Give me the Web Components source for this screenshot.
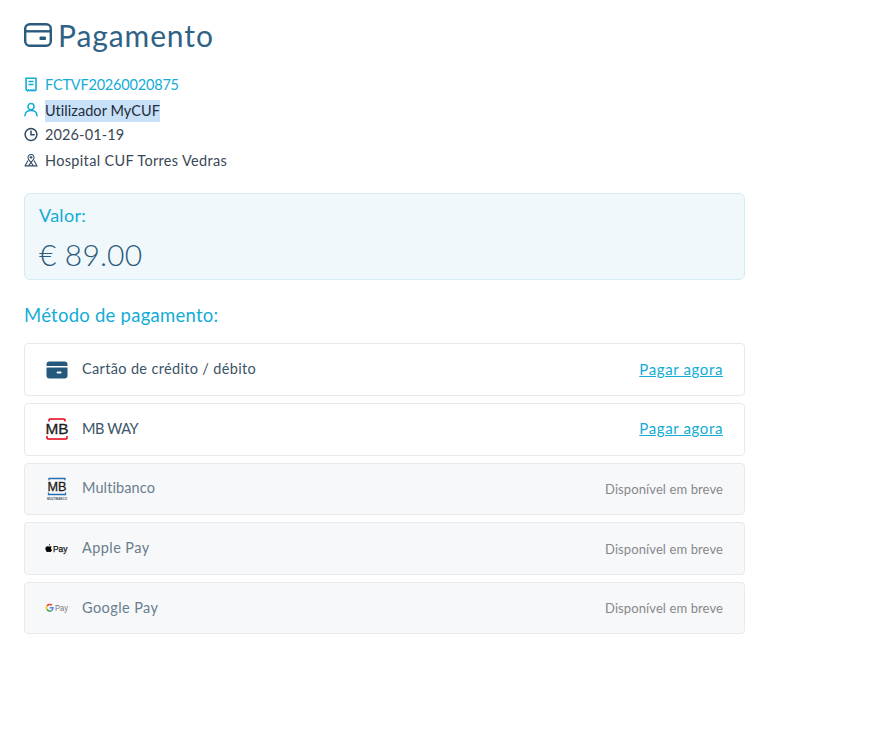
<!DOCTYPE html>
<html lang="pt"><head><meta charset="utf-8"><title>Pagamento</title>
<style>
html,body{margin:0;padding:0;background:#fff}
body{font-family:Lato,"Open Sans",sans-serif;color:#2c4a63}
</style></head><body>
<pay-page>
  <pay-title slot="title">Pagamento</pay-title>
  <info-row slot="info" icon="receipt" tone="link" style="--ls:-.19px">FCTVF20260020875</info-row>
  <info-row slot="info" icon="user" tone="selected" style="--ls:.05px">Utilizador MyCUF</info-row>
  <info-row slot="info" icon="clock" style="--ls:.12px">2026-01-19</info-row>
  <info-row slot="info" icon="hospital" style="--ls:.33px">Hospital CUF Torres Vedras</info-row>
  <value-box slot="value" label="Valor:" amount="€ 89.00"></value-box>
  <method-list slot="methods" heading="Método de pagamento:">
    <method-row icon="card" action="Pagar agora" style="--ls:.34px">Cartão de crédito / débito</method-row>
    <method-row icon="mbway" action="Pagar agora" style="--ls:-.4px">MB WAY</method-row>
    <method-row icon="multibanco" soon style="--ls:.1px">Multibanco</method-row>
    <method-row icon="apple" soon style="--ls:.42px">Apple Pay</method-row>
    <method-row icon="google" soon style="--ls:.42px">Google Pay</method-row>
  </method-list>
</pay-page>
<script>
const ICONS={
receipt:`<svg width="14" height="15" viewBox="0 0 14 15" fill="none" stroke="#12acd6" stroke-width="1.600"><path d="M2 1.200h10v11.600l-1.200 1-1.300-1-1.200 1-1.300-1-1.300 1-1.200-1-1.300 1-1-1z" stroke-linejoin="round"/><path d="M4.500 4.500h5M4.500 7.500h5" /></svg>`,
user:`<svg width="15" height="15" viewBox="0 0 15 15" fill="none" stroke="#12acd6" stroke-width="1.600" stroke-linecap="round"><circle cx="7.500" cy="4.400" r="3.300"/><path d="M1 14.200c.3-3.500 3-5.500 6.500-5.500s6.200 2 6.500 5.500"/></svg>`,
clock:`<svg width="15" height="15" viewBox="0 0 15 15" fill="none" stroke="#2c4a63" stroke-width="1.600" stroke-linecap="round"><circle cx="7.500" cy="7.500" r="6.300"/><path d="M7.500 3.800v4h3.400"/></svg>`,
hospital:`<svg width="15" height="14" viewBox="0 0 15 14" fill="none" stroke="#2c4a63" stroke-width="1.100"><path d="M4.300 7.500 1 13.300h13l-3.300-5.800" stroke-linejoin="round"/><path d="M7.500 1a3.300 3.300 0 0 1 3.300 3.300c0 2-1.900 3.700-3.300 5.200-1.400-1.500-3.300-3.200-3.300-5.200A3.300 3.300 0 0 1 7.500 1z"/><path d="M7.500 2.700v3M6 4.200h3M5 13l2.500-3.400L10 13" /></svg>`,
card:`<svg width="22" height="18" viewBox="0 0 22 18"><path fill="#24587c" fill-rule="evenodd" d="M3.500.5h15a3 3 0 0 1 3 3V5H.5V3.500a3 3 0 0 1 3-3zM.5 6.500h21v8a3 3 0 0 1-3 3h-15a3 3 0 0 1-3-3zM11.500 10.500a.8.8 0 0 0-.8.8v.4a.8.8 0 0 0 .8.8h3.200a.8.8 0 0 0 .8-.8v-.4a.8.8 0 0 0-.8-.8z"/></svg>`,
mbway:`<svg width="24" height="22" viewBox="0 0 24 22"><path d="M4 3.500V2a1 1 0 0 1 1-1h14a1 1 0 0 1 1 1v1.500M2 18v2a1 1 0 0 0 1 1h18a1 1 0 0 0 1-1v-2" fill="none" stroke="#e3000f" stroke-width="1.500"/><text x="12" y="16" text-anchor="middle" font-family="Liberation Sans" font-size="14" fill="#1d1d1b" stroke="#1d1d1b" stroke-width=".3" textLength="23" lengthAdjust="spacingAndGlyphs">MB</text></svg>`,
multibanco:`<svg width="22" height="24" viewBox="0 0 22 24"><path d="M3 3.200V1.500h16v1.700M2.500 15.500v2h17v-2" fill="none" stroke="#2a6db0" stroke-width="1.300"/><text x="11" y="14" text-anchor="middle" font-family="Liberation Sans" font-size="13" fill="#1d1d1b" stroke="#1d1d1b" stroke-width=".3" textLength="19" lengthAdjust="spacingAndGlyphs">MB</text><text x="11" y="22.500" text-anchor="middle" font-family="Liberation Sans" font-size="3" font-weight="700" fill="#44525e" textLength="20" lengthAdjust="spacingAndGlyphs">MULTIBANCO</text></svg>`,
apple:`<svg width="24" height="12" viewBox="0 0 24 12"><path fill="#000" d="M5.300 3.200c-.6 0-1 .4-1.500.4s-.9-.4-1.500-.4C1.300 3.200.4 4.100.4 5.600c0 1.700 1.100 3.500 2 3.500.5 0 .8-.3 1.400-.3s.9.300 1.400.3c.8 0 1.500-1.100 1.800-2-1.300-.6-1.400-2.700-.2-3.300-.3-.4-.9-.6-1.500-.6zM4.900 1c-.6.100-1.200.7-1.100 1.600.6 0 1.200-.7 1.100-1.600z"/><text x="8" y="9" font-family="Liberation Sans" font-size="9" fill="#111" stroke="#111" stroke-width=".25" textLength="14.500" lengthAdjust="spacingAndGlyphs">Pay</text></svg>`,
google:`<svg width="24" height="12" viewBox="0 0 24 12" fill="none" stroke-width="1.500"><path d="M7 3.300A3.200 3.200 0 0 0 2 4" stroke="#ea4335"/><path d="M2 4A3.200 3.200 0 0 0 2 7.400" stroke="#fbbc05"/><path d="M2 7.400A3.200 3.200 0 0 0 6.800 8.500" stroke="#34a853"/><path d="M6.800 8.500C7.500 7.800 7.900 7 7.900 5.800H4.800" stroke="#4285f4"/><text x="10" y="9" font-family="Liberation Sans" font-size="8.500" fill="#777" stroke="none" textLength="13" lengthAdjust="spacingAndGlyphs">Pay</text></svg>`,
titleCard:`<svg width="28" height="24" viewBox="0 0 28 24" fill="none" stroke="#2a5a7c" stroke-width="2.400"><rect x="1.200" y="1.200" width="25.600" height="21.600" rx="4.500"/><path d="M1.200 8.300h25.600"/><rect x="15.500" y="13.500" width="6.500" height="3.600" rx="1.200" fill="#2a5a7c" stroke="none"/></svg>`
};
function def(name,css,html){
  customElements.define(name,class extends HTMLElement{
    constructor(){super();this.attachShadow({mode:"open"})}
    connectedCallback(){this.shadowRoot.innerHTML=`<style>${css}</style>${html(this)}`}
  });
}
const F=`font-family:Lato,"Open Sans",sans-serif;`;
def("pay-page",`:host{display:block;width:721px;padding:15px 0 0 24px;${F}}
 .info{display:flex;flex-direction:column;margin-top:16.500px}
 .value{display:block;margin-top:20.500px}`,
 ()=>`<slot name="title"></slot><div class="info"><slot name="info"></slot></div><div class="value"><slot name="value"></slot></div><slot name="methods"></slot>`);
def("pay-title",`:host{display:flex;align-items:center;gap:6px;height:40px;color:#2f6285}
 span{font-size:30px;font-weight:400;letter-spacing:.9px;line-height:40px}`,
 ()=>`${ICONS.titleCard}<span><slot></slot></span>`);
def("info-row",`:host{display:flex;align-items:center;height:25.300px;font-size:14.500px;color:#3a4856;letter-spacing:var(--ls,.25px)}
 .i{width:14px;margin-right:7px;display:flex;justify-content:center}
 :host([tone=link]){color:#12acd6}
 :host([tone=selected]) span{background:#c8e0f8;color:#1f2d3a;line-height:22px;display:inline-block;height:22px;margin-top:4px}`,
 h=>`<div class="i">${ICONS[h.getAttribute("icon")]}</div><span><slot></slot></span>`);
def("value-box",`:host{display:block;box-sizing:border-box;height:87px;background:#f0f8fb;border:1px solid #d5ecf3;border-radius:6px;padding:9px 14px}
 .l{font-size:18px;color:#12acd6;line-height:24px;letter-spacing:.28px}
 .a{font-size:30px;font-weight:300;color:#2a5a7c;line-height:40px;margin-top:7px;letter-spacing:.15px}`,
 h=>`<div class="l">${h.getAttribute("label")}</div><div class="a">${h.getAttribute("amount")}</div>`);
def("method-list",`:host{display:block}
 h2{margin:22px 0 15.300px;font-size:18.500px;font-weight:400;line-height:26px;color:#12acd6;letter-spacing:.25px}
 .l{display:flex;flex-direction:column;gap:7px}`,
 h=>`<h2>${h.getAttribute("heading")}</h2><div class="l"><slot></slot></div>`);
def("method-row",`:host{display:flex;align-items:center;box-sizing:border-box;height:52.600px;background:#fff;border:1px solid #e8e9ea;border-radius:4px;padding:0 21px 0 20px;font-size:14.500px;color:#3a5468}
 :host([soon]){background:#f7f8f9;color:#6a7e8e}
 .i{width:24px;display:flex;justify-content:center;margin-right:13px}
 .t{flex:1;letter-spacing:var(--ls,.2px);padding-bottom:2px}
 a{color:#12acd6;text-decoration:underline;font-size:15px;letter-spacing:.62px;padding-bottom:2px}
 .s{font-size:13px;color:#85888c;letter-spacing:.1px}`,
 h=>`<div class="i">${ICONS[h.getAttribute("icon")]}</div><div class="t"><slot></slot></div>${h.hasAttribute("soon")?`<span class="s">Disponível em breve</span>`:`<a href="#">${h.getAttribute("action")}</a>`}`);
</script>
</body></html>
